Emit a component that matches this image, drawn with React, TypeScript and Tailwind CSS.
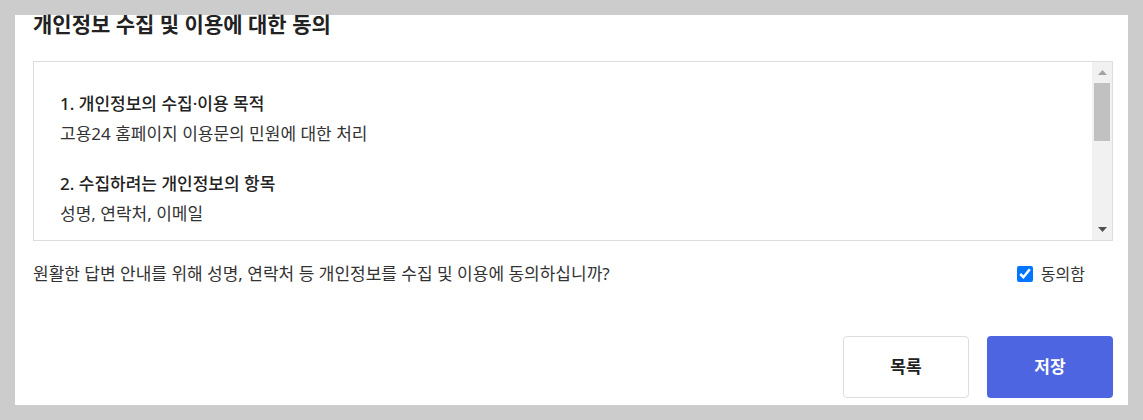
import React from "react";

const sections = [
  { title: "1. 개인정보의 수집·이용 목적", body: "고용24 홈페이지 이용문의 민원에 대한 처리" },
  { title: "2. 수집하려는 개인정보의 항목", body: "성명, 연락처, 이메일" },
  { title: "3. 개인정보의 보유 및 이용 기간", body: "민원 처리 완료 후 3년" },
  { title: "4. 동의를 거부할 권리 및 불이익", body: "동의를 거부할 수 있으며, 거부 시 답변 안내가 제한될 수 있습니다." },
];

function FakeScrollbar() {
  return (
    <div className="w-[20px] shrink-0 bg-[#f1f1f1] flex flex-col items-center">
      <div className="h-[21px] flex items-center justify-center">
        <svg width="9" height="5" viewBox="0 0 9 5">
          <path d="M4.5 0 L9 5 L0 5 Z" fill="#a3a3a3" />
        </svg>
      </div>
      <div className="w-[16px] h-[58px] bg-[#c1c1c1]" />
      <div className="flex-1" />
      <div className="h-[21px] flex items-center justify-center">
        <svg width="9" height="5" viewBox="0 0 9 5">
          <path d="M0 0 L9 0 L4.5 5 Z" fill="#505050" />
        </svg>
      </div>
    </div>
  );
}

export default function App() {
  return (
    <div
      className="w-[1143px] h-[420px] bg-[#cccccc] pt-[15px] pl-[15px]"
      style={{ fontFamily: '"Noto Sans", "Noto Sans CJK KR", sans-serif' }}
    >
      <div className="w-[1113px] h-[390px] bg-white pl-[18px] pr-[15px] flex flex-col">
        <h2 className="text-[21px] font-bold leading-[19px] text-[#222]">
          개인정보 수집 및 이용에 대한 동의
        </h2>

        {/* 약관 내용 */}
        <div className="mt-[27px] h-[180px] border border-[#dddddd] flex">
          <div className="flex-1 overflow-hidden pl-[26px] pt-[30px] text-[17px] text-[#333]">
            {sections.map((s) => (
              <div key={s.title} className="mb-[26px]">
                <p className="font-medium text-[#222] leading-[24px]">{s.title}</p>
                <p className="mt-[6px] leading-[24px]">{s.body}</p>
              </div>
            ))}
          </div>
          <FakeScrollbar />
        </div>

        <div className="mt-[21px] flex items-center justify-between text-[17px] text-[#333] leading-[24px]">
          <p>원활한 답변 안내를 위해 성명, 연락처 등 개인정보를 수집 및 이용에 동의하십니까?</p>
          <label className="flex items-center gap-[8px] mr-[28px] text-[16px]">
            <input type="checkbox" defaultChecked className="w-[16px] h-[16px] m-0 accent-[#0075ff]" />
            <span>동의함</span>
          </label>
        </div>

        <div className="mt-auto mb-[7px] flex justify-end gap-[18px]">
          <button className="w-[126px] h-[62px] rounded-[4px] border border-[#dddddd] bg-white text-[17px] font-bold text-[#222]">
            목록
          </button>
          <button className="w-[126px] h-[62px] rounded-[4px] bg-[#4e65e1] text-[17px] font-bold text-white">
            저장
          </button>
        </div>
      </div>
    </div>
  );
}
